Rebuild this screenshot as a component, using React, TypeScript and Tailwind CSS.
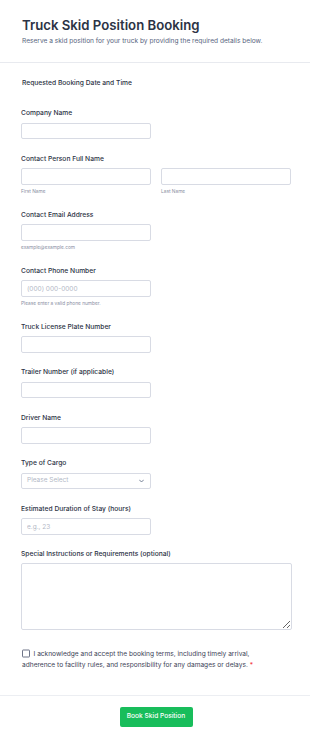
import React from "react";

const labelCls = "block text-[6.7px] leading-[10px] font-medium text-[#2c3345]";
const inputCls =
  "block h-[16.5px] w-[130px] rounded-[2px] border border-[#d8dbe4] bg-white px-[5px] text-[6.5px] text-[#2c3345] placeholder:text-[#b3b8c6] outline-none";

function Field({
  label,
  placeholder,
  sub,
  mt = true,
}: {
  label: string;
  placeholder?: string;
  sub?: string;
  mt?: boolean;
}) {
  return (
    <div className={mt ? "mt-[14.5px]" : ""}>
      <label className={labelCls}>{label}</label>
      <input className={`${inputCls} mt-[4.5px]`} placeholder={placeholder} />
      {sub && (
        <div className="mt-[3.5px] text-[4.8px] leading-[7px] text-[#8a8fa3]">{sub}</div>
      )}
    </div>
  );
}

export default function App() {
  return (
    <div className="w-[310px] bg-white font-['Inter',sans-serif] pb-[17px]">
      <div className="px-[22px] pt-[16px] pb-[16px]">
        <h1 className="text-[13.2px] leading-[18px] font-semibold text-[#2c3345]">
          Truck Skid Position Booking
        </h1>
        <p className="mt-[1.7px] text-[6.6px] leading-[10px] text-[#57647e]">
          Reserve a skid position for your truck by providing the required details below.
        </p>
      </div>
      <div className="h-px bg-[#e8eaef]" />
      <div className="px-[21px] pt-[15.6px]">
        <div className={`${labelCls} pl-px`}>Requested Booking Date and Time</div>
        <div className="mt-[20px]">
          <Field label="Company Name" mt={false} />
        </div>
        <div className="mt-[14.5px]">
          <label className={labelCls}>Contact Person Full Name</label>
          <div className="mt-[4.5px] flex gap-[10px]">
            <div>
              <input className={inputCls} />
              <div className="mt-[3.5px] text-[4.8px] leading-[7px] text-[#8a8fa3]">First Name</div>
            </div>
            <div>
              <input className={inputCls} />
              <div className="mt-[3.5px] text-[4.8px] leading-[7px] text-[#8a8fa3]">Last Name</div>
            </div>
          </div>
        </div>
        <Field label="Contact Email Address" sub="example@example.com" />
        <Field label="Contact Phone Number" placeholder="(000) 000-0000" sub="Please enter a valid phone number." />
        <Field label="Truck License Plate Number" />
        <Field label="Trailer Number (if applicable)" />
        <Field label="Driver Name" />
        <div className="mt-[14.5px]">
          <label className={labelCls}>Type of Cargo</label>
          <div className="mt-[4.5px] flex h-[16.5px] w-[130px] items-center justify-between rounded-[2px] border border-[#d8dbe4] bg-white px-[5px]">
            <span className="text-[6.5px] text-[#b3b8c6]">Please Select</span>
            <svg width="5" height="4" viewBox="0 0 10 6" fill="none" className="mr-[1px]">
              <path d="M1 1l4 4 4-4" stroke="#57647e" strokeWidth="1.6" strokeLinecap="round" strokeLinejoin="round" />
            </svg>
          </div>
        </div>
        <Field label="Estimated Duration of Stay (hours)" placeholder="e.g., 23" />
        <div className="mt-[14px]">
          <label className={labelCls}>Special Instructions or Requirements (optional)</label>
          <textarea className="mt-[4px] block h-[67px] w-[271px] rounded-[2px] border border-[#d8dbe4] bg-white outline-none" />
        </div>
        <div className="mt-[18.5px] max-w-[234px] pl-px text-[6.6px] leading-[10.6px] text-[#3c4256]">
          <span className="mr-[3.5px] inline-block h-[8px] w-[8px] translate-y-[1.5px] rounded-[1px] border border-[#6f7588] align-baseline" />
          I acknowledge and accept the booking terms, including timely arrival, adherence to facility rules, and responsibility for any damages or delays.{" "}
          <span className="text-[#f23a3c]">*</span>
        </div>
      </div>
      <div className="mt-[25px] h-px bg-[#eceef2]" />
      <div className="flex justify-center pt-[11px]">
        <button className="ml-[2px] h-[19.5px] w-[73px] rounded-[2px] bg-[#18bd5b] text-[6.6px] font-medium text-white">
          Book Skid Position
        </button>
      </div>
    </div>
  );
}
